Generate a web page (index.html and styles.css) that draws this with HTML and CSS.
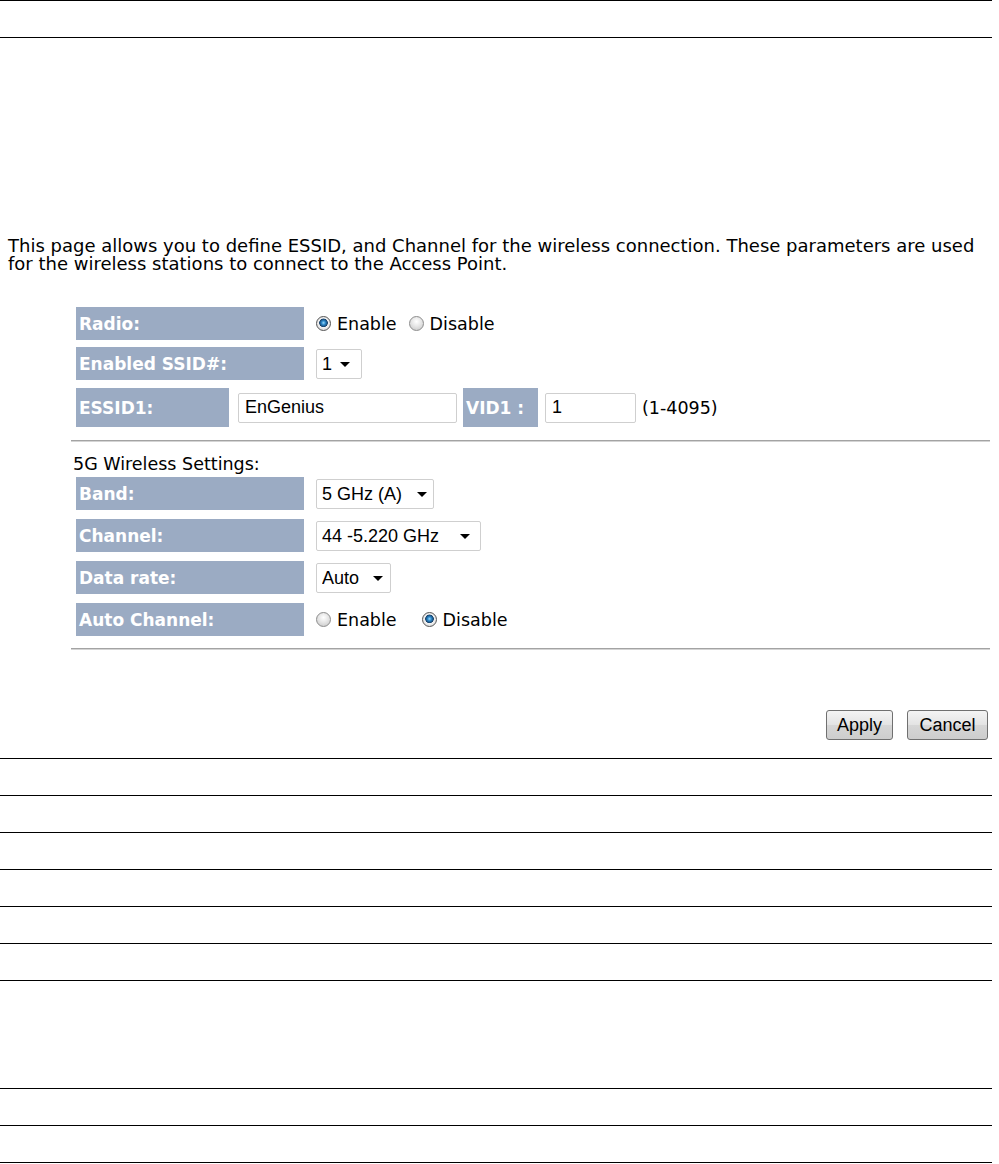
FILE: index.html
```html
<!DOCTYPE html>
<html lang="en">
<head>
    <meta charset="UTF-8">
    <title>Wireless Settings</title>
    <link rel="stylesheet" href="styles.css">
</head>
<body>
    <div class="frame">
        <div class="band first"></div>

        <div class="content">
            <p class="intro">This page allows you to define ESSID, and Channel for the wireless connection. These parameters are used for the wireless stations to connect to the Access Point.</p>

            <div class="form">
                <div class="row">
                    <div class="label">Radio:</div>
                    <div class="value">
                        <label class="opt"><input type="radio" name="radio" checked>Enable</label>
                        <label class="opt"><input type="radio" name="radio">Disable</label>
                    </div>
                </div>
                <div class="row">
                    <div class="label">Enabled SSID#:</div>
                    <div class="value">
                        <span class="sel w-ssid"><select><option>1</option><option>2</option></select></span>
                    </div>
                </div>
                <div class="row tall">
                    <div class="label short">ESSID1:</div>
                    <input type="text" class="field essid" value="EnGenius">
                    <div class="label vid">VID1 :</div>
                    <input type="text" class="field vidin" value="1">
                    <span class="hint">(1-4095)</span>
                </div>

                <div class="sep"></div>

                <div class="heading">5G Wireless Settings:</div>
                <div class="group">
                    <div class="row">
                        <div class="label">Band:</div>
                        <div class="value">
                            <span class="sel w-band"><select><option>5 GHz (A)</option></select></span>
                        </div>
                    </div>
                    <div class="row">
                        <div class="label">Channel:</div>
                        <div class="value">
                            <span class="sel w-chan"><select><option>44 -5.220 GHz</option></select></span>
                        </div>
                    </div>
                    <div class="row">
                        <div class="label">Data rate:</div>
                        <div class="value">
                            <span class="sel w-rate"><select><option>Auto</option></select></span>
                        </div>
                    </div>
                    <div class="row">
                        <div class="label">Auto Channel:</div>
                        <div class="value wide">
                            <label class="opt"><input type="radio" name="auto">Enable</label>
                            <label class="opt"><input type="radio" name="auto" checked>Disable</label>
                        </div>
                    </div>
                </div>

                <div class="sep last"></div>
            </div>

            <div class="actions">
                <button class="btn apply">Apply</button>
                <button class="btn cancel">Cancel</button>
            </div>
        </div>

        <div class="band"></div>
        <div class="band"></div>
        <div class="band"></div>
        <div class="band"></div>
        <div class="band"></div>
        <div class="band"></div>
        <div class="band big"></div>
        <div class="band"></div>
        <div class="band"></div>
    </div>
</body>
</html>
```

FILE: styles.css
```css
body {
    margin: 0;
    font-family: "DejaVu Sans", Verdana, sans-serif;
    font-size: 17.5px;
    color: #000;
    background: #fff;
}
.frame {
    width: 992px;
}
.band {
    height: 36px;
    border-bottom: 1px solid #000;
}
.band.first {
    border-top: 1px solid #000;
    height: 36px;
}
.band.big {
    height: 107px;
}
.content {
    height: 721px;
    box-sizing: border-box;
    border-bottom: 1px solid #000;
    padding-top: 199px;
}
.intro {
    margin: 0;
    padding: 0 8px;
    font-size: 18px;
    line-height: 18px;
}
.form {
    margin: 34px 0 0 71px;
    width: 919px;
}
.row {
    display: flex;
    align-items: center;
    height: 33px;
    padding-left: 5px;
}
.row + .row {
    margin-top: 7px;
}
.row.tall {
    height: 39px;
    margin-top: 8px;
    align-items: stretch;
}
.group {
    margin-top: 4px;
}
.group .row + .row {
    margin-top: 9px;
}
.label {
    width: 228px;
    height: 100%;
    box-sizing: border-box;
    background-color: #9babc3;
    color: #fff;
    font-weight: bold;
    font-size: 17px;
    padding-left: 3px;
    display: flex;
    align-items: center;
    flex-shrink: 0;
}
.label.short {
    width: 153px;
}
.label.vid {
    width: 75px;
    margin-left: 6px;
}
.value {
    margin-left: 12px;
    display: flex;
    align-items: center;
}
.opt {
    display: inline-flex;
    align-items: center;
    margin-right: 12px;
}
.value.wide .opt {
    margin-right: 25px;
}
.opt input {
    appearance: none;
    -webkit-appearance: none;
    width: 15px;
    height: 15px;
    margin: 0 6px 0 0;
    border: 1px solid #8c8c8c;
    border-radius: 50%;
    box-sizing: border-box;
    background: radial-gradient(circle at 50% 35%, #ffffff 0, #e6e6e6 45%, #c4c4c4 100%);
}
.opt input:checked {
    border-color: #555;
    background: radial-gradient(circle at 50% 45%, #9ad9fb 0, #2a86c8 2px, #17426b 4px, #f2f2f2 4.6px, #cccccc 100%);
}
.sel {
    position: relative;
    display: inline-block;
}
.sel select {
    appearance: none;
    -webkit-appearance: none;
    height: 30px;
    border: 1px solid #cfcfcf;
    border-radius: 2px;
    background: #fff;
    font-family: "Liberation Sans", Arial, sans-serif;
    font-size: 18px;
    color: #000;
    padding: 0 0 0 5px;
    margin: 0;
}
.sel::after {
    content: "";
    position: absolute;
    top: 13px;
    border-left: 5px solid transparent;
    border-right: 5px solid transparent;
    border-top: 5px solid #000;
}
.w-ssid select { width: 46px; }
.w-ssid::after { left: 24px; }
.w-band select { width: 118px; }
.w-band::after { left: 101px; }
.w-chan select { width: 165px; }
.w-chan::after { left: 144px; }
.w-rate select { width: 75px; }
.w-rate::after { left: 57px; }
.field {
    align-self: center;
    height: 30px;
    box-sizing: border-box;
    border: 1px solid #cfcfcf;
    border-radius: 2px;
    font-family: "Liberation Sans", Arial, sans-serif;
    font-size: 18px;
    padding: 0 6px;
    margin: 0;
}
.field.essid {
    width: 219px;
    margin-left: 9px;
}
.field.vidin {
    width: 91px;
    margin-left: 7px;
}
.hint {
    align-self: center;
    margin-left: 6px;
}
.sep {
    margin-top: 13px;
    border-top: 1px solid #a3a3a3;
    border-bottom: 1px solid #d4d4d4;
}
.sep.last {
    margin-top: 12px;
}
.heading {
    margin: 13px 0 0 2px;
    line-height: 18px;
}
.actions {
    margin-top: 60px;
    padding-right: 4px;
    display: flex;
    justify-content: flex-end;
    gap: 14px;
}
.btn {
    height: 30px;
    border: 1px solid #707070;
    border-radius: 3px;
    background: linear-gradient(#f4f4f4, #e3e3e3 50%, #d6d6d6 51%, #cdcdcd);
    font-family: "Liberation Sans", Arial, sans-serif;
    font-size: 18px;
    color: #000;
    padding: 0;
    cursor: pointer;
}
.apply {
    width: 67px;
}
.cancel {
    width: 81px;
}
```
